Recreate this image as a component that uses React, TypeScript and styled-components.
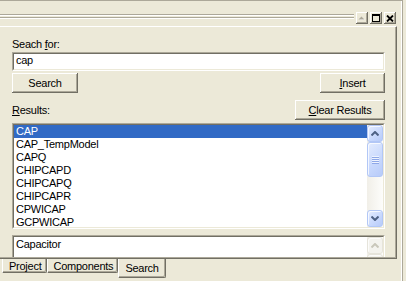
import React from "react";
import styled, { createGlobalStyle } from "styled-components";

const GlobalStyle = createGlobalStyle`
  html, body {
    margin: 0;
    padding: 0;
    background: #ece9d8;
  }
  body {
    font-family: "Liberation Sans", Arial, sans-serif;
    font-size: 11px;
    letter-spacing: -0.25px;
    color: #000;
  }
`;

const results = [
  "CAP",
  "CAP_TempModel",
  "CAPQ",
  "CHIPCAPD",
  "CHIPCAPQ",
  "CHIPCAPR",
  "CPWICAP",
  "GCPWICAP",
];

const Screen = styled.div`
  width: 406px;
  height: 281px;
  overflow: hidden;
  background: #ece9d8;
`;

const Dock = styled.div`
  box-sizing: border-box;
  width: 403px;
  height: 281px;
  border-top: 1px solid #aca899;
  border-right: 1px solid #aca899;
  box-shadow: inset -1px 0 #fff;
  display: flex;
  flex-direction: column;
`;

const TitleBar = styled.div`
  display: flex;
  align-items: flex-start;
  height: 25px;
  box-sizing: border-box;
  padding: 11px 6px 0 0;
`;

const Grip = styled.div`
  flex: 1;
  height: 5px;
  margin: 2px 2px 0 0;
  background: linear-gradient(
    to bottom,
    #aca899 0 1px,
    #fff 1px 2px,
    transparent 2px 3px,
    #aca899 3px 4px,
    #fff 4px 5px
  );
`;

const CaptionButtons = styled.div`
  display: flex;
  gap: 2px;
`;

const CaptionButton = styled.div`
  width: 12px;
  height: 12px;
  box-sizing: border-box;
  background: #ece9d8;
  box-shadow: inset -1px -1px #716f64, inset 1px 1px #fff, inset -2px -2px #aca899;
  display: flex;
  align-items: center;
  justify-content: center;
  svg {
    display: block;
  }
`;

const Panel = styled.div`
  box-sizing: border-box;
  width: 397px;
  height: 233px;
  border-top: 1px solid #fff;
  border-right: 1px solid #716f64;
  border-bottom: 1px solid #716f64;
`;

const PanelBody = styled.div`
  box-sizing: border-box;
  height: 100%;
  border-right: 1px solid #aca899;
  border-bottom: 1px solid #aca899;
  padding: 11px 10px 0 12px;
  overflow: hidden;
  display: flex;
  flex-direction: column;
`;

const FieldLabel = styled.div`
  height: 13px;
  line-height: 13px;
  white-space: nowrap;
`;

const Sunken = styled.div<{ $h: number; $gap?: number }>`
  box-sizing: border-box;
  height: ${(p) => p.$h}px;
  margin-top: ${(p) => p.$gap ?? 0}px;
  flex: none;
  border: 1px solid;
  border-color: #aca899 #fff #fff #aca899;
`;

const SunkenInner = styled.div`
  box-sizing: border-box;
  height: 100%;
  border: 1px solid;
  border-color: #716f64 #ece9d8 #ece9d8 #716f64;
  background: #fff;
  display: flex;
  overflow: hidden;
`;

const TextValue = styled.div`
  padding: 0 2px;
  line-height: 13px;
`;

const ButtonRow = styled.div<{ $gap: number }>`
  display: flex;
  align-items: center;
  justify-content: space-between;
  margin-top: ${(p) => p.$gap}px;
  height: 20px;
`;

const Button = styled.div<{ $w: number }>`
  box-sizing: border-box;
  width: ${(p) => p.$w}px;
  height: 20px;
  background: #ece9d8;
  box-shadow: inset -1px -1px #716f64, inset 1px 1px #fff, inset -2px -2px #aca899;
  display: flex;
  align-items: center;
  justify-content: center;
  line-height: 13px;
  white-space: nowrap;
`;

const List = styled.div`
  flex: 1;
  overflow: hidden;
`;

const Item = styled.div<{ $selected?: boolean }>`
  height: 13px;
  line-height: 13px;
  padding-left: 2px;
  white-space: nowrap;
  background: ${(p) => (p.$selected ? "#316ac5" : "transparent")};
  color: ${(p) => (p.$selected ? "#fff" : "#000")};
`;

const Description = styled.div`
  flex: 1;
  padding: 1px 2px 0;
  line-height: 13px;
`;

const ScrollBar = styled.div`
  width: 16px;
  flex: none;
  display: flex;
  flex-direction: column;
  background: linear-gradient(to right, #f1efe8, #fdfdfb);
`;

const ScrollButton = styled.div<{ $h?: number; $disabled?: boolean }>`
  box-sizing: border-box;
  flex: none;
  width: 16px;
  height: ${(p) => p.$h ?? 17}px;
  border-radius: 3px;
  border: 1px solid ${(p) => (p.$disabled ? "#e6e4db" : "#b2c7f6")};
  background: ${(p) =>
    p.$disabled
      ? "#f4f3ee"
      : "linear-gradient(135deg, #e4ecfe 0%, #c9d9fd 55%, #b7cbf9 100%)"};
  box-shadow: inset 1px 1px rgba(255, 255, 255, 0.75);
  display: flex;
  align-items: center;
  justify-content: center;
  svg {
    display: block;
  }
`;

const ThumbGrip = styled.div`
  width: 7px;
  height: 8px;
  background: repeating-linear-gradient(
    to bottom,
    #eef3fe 0 1px,
    #8ea8e8 1px 2px
  );
`;

const ScrollSpace = styled.div`
  flex: 1;
`;

const TabStrip = styled.div`
  display: flex;
  align-items: flex-start;
  padding-left: 2px;
`;

const Tab = styled.div<{ $active?: boolean }>`
  box-sizing: border-box;
  height: ${(p) => (p.$active ? 19 : 14)}px;
  padding: ${(p) => (p.$active ? "4px 6px 0 6px" : "2px 4px 0 6px")};
  border-left: 1px solid #fff;
  border-right: 1px solid #716f64;
  border-bottom: 1px solid #716f64;
  border-bottom-right-radius: 2px;
  box-shadow: inset -1px -1px #aca899;
  line-height: 11px;
  white-space: nowrap;
`;

const ChevronUp = ({ color }: { color: string }) => (
  <svg width="8" height="5" viewBox="0 0 8 5">
    <polyline points="0.5,4.5 4,1 7.5,4.5" fill="none" stroke={color} strokeWidth="2" />
  </svg>
);

const ChevronDown = ({ color }: { color: string }) => (
  <svg width="8" height="5" viewBox="0 0 8 5">
    <polyline points="0.5,0.5 4,4 7.5,0.5" fill="none" stroke={color} strokeWidth="2" />
  </svg>
);

function App() {
  return (
    <Screen>
      <GlobalStyle />
      <Dock>
        <TitleBar>
          <Grip />
          <CaptionButtons>
            <CaptionButton>
              <svg width="8" height="6" viewBox="0 0 8 6">
                <polygon points="1,5 4,2 7,5" fill="#fff" />
                <polygon points="0.5,4.5 3.5,1.5 6.5,4.5" fill="#aca899" />
              </svg>
            </CaptionButton>
            <CaptionButton>
              <svg width="8" height="8" viewBox="0 0 8 8">
                <rect x="0.5" y="0.5" width="7" height="7" fill="none" stroke="#000" />
                <rect x="0" y="0" width="8" height="2" fill="#000" />
              </svg>
            </CaptionButton>
            <CaptionButton>
              <svg width="8" height="7" viewBox="0 0 8 7">
                <path d="M1 0.5 L7 6.5 M7 0.5 L1 6.5" stroke="#000" strokeWidth="1.8" />
              </svg>
            </CaptionButton>
          </CaptionButtons>
        </TitleBar>
        <Panel>
          <PanelBody>
            <FieldLabel>
              Seach <u>f</u>or:
            </FieldLabel>
            <Sunken $h={19} $gap={1}>
              <SunkenInner>
                <TextValue>cap</TextValue>
              </SunkenInner>
            </Sunken>
            <ButtonRow $gap={2}>
              <Button $w={66}>Search</Button>
              <Button $w={65}>
                <u>I</u>nsert
              </Button>
            </ButtonRow>
            <ButtonRow $gap={7}>
              <FieldLabel>
                <u>R</u>esults:
              </FieldLabel>
              <Button $w={90}>
                <u>C</u>lear Results
              </Button>
            </ButtonRow>
            <Sunken $h={106} $gap={3}>
              <SunkenInner>
                <List>
                  {results.map((r, i) => (
                    <Item key={r} $selected={i === 0}>
                      {r}
                    </Item>
                  ))}
                </List>
                <ScrollBar>
                  <ScrollButton>
                    <ChevronUp color="#4d6185" />
                  </ScrollButton>
                  <ScrollButton $h={35}>
                    <ThumbGrip />
                  </ScrollButton>
                  <ScrollSpace />
                  <ScrollButton>
                    <ChevronDown color="#4d6185" />
                  </ScrollButton>
                </ScrollBar>
              </SunkenInner>
            </Sunken>
            <Sunken $h={60} $gap={6}>
              <SunkenInner>
                <Description>Capacitor</Description>
                <ScrollBar>
                  <ScrollButton $disabled>
                    <ChevronUp color="#c9c7ba" />
                  </ScrollButton>
                  <ScrollButton $disabled $h={20} />
                </ScrollBar>
              </SunkenInner>
            </Sunken>
          </PanelBody>
        </Panel>
        <TabStrip>
          <Tab>Project</Tab>
          <Tab>Components</Tab>
          <Tab $active>Search</Tab>
        </TabStrip>
      </Dock>
    </Screen>
  );
}

export default App;
